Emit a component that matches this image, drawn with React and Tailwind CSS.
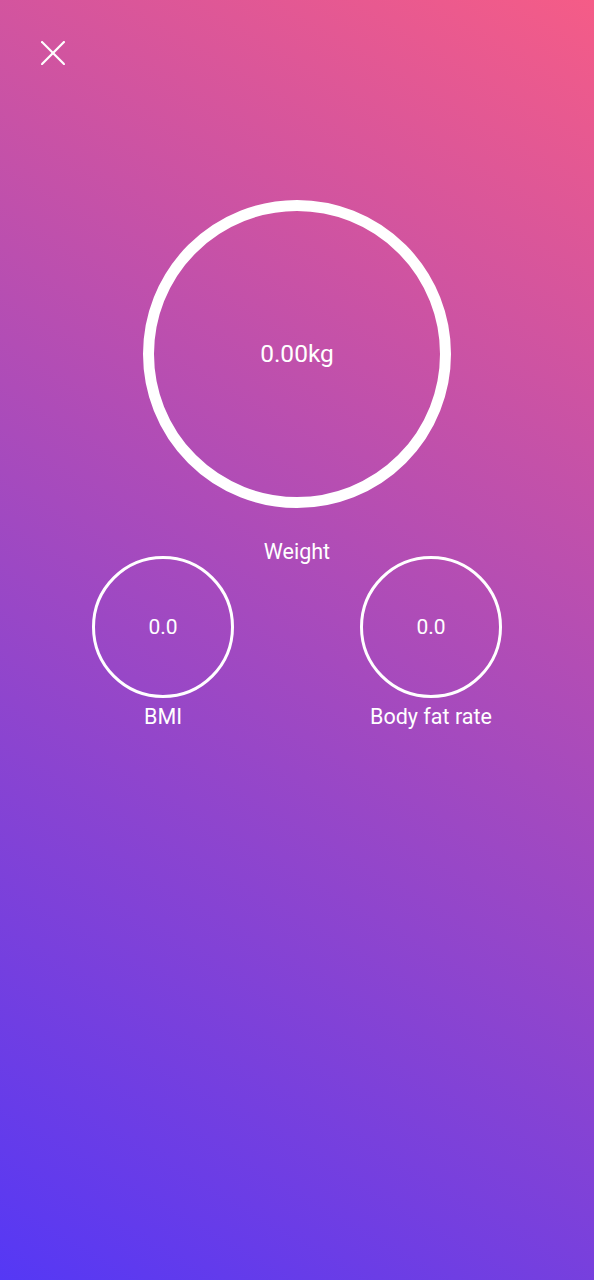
export default function App() {
  return (
    <div
      className="min-h-[1280px] w-full bg-[linear-gradient(30deg,#5538f5_0%,#f55c87_100%)] text-white"
      style={{ fontFamily: 'Roboto, "Noto Sans", sans-serif' }}
    >
      <div className="pl-[41px] pt-[41px]">
        <svg width="24" height="24" viewBox="0 0 24 24" fill="none" stroke="white" strokeWidth="2.2" strokeLinecap="square">
          <line x1="1" y1="1" x2="23" y2="23" />
          <line x1="23" y1="1" x2="1" y2="23" />
        </svg>
      </div>

      <div className="mt-[135px] flex flex-col items-center">
        <div className="flex h-[308px] w-[308px] items-center justify-center rounded-full border-[11px] border-white">
          <span className="text-[24.5px] leading-none">0.00kg</span>
        </div>
        <div className="mt-[32px] text-[21.5px] leading-[24px]">Weight</div>
      </div>

      <div className="mt-[-8px] flex justify-center gap-[126px]">
        <div className="flex w-[142px] flex-col items-center">
          <div className="flex h-[142px] w-[142px] items-center justify-center rounded-full border-[3px] border-white">
            <span className="text-[21px] leading-none">0.0</span>
          </div>
          <div className="mt-[7px] text-[21.5px] leading-[24px]">BMI</div>
        </div>
        <div className="flex w-[142px] flex-col items-center">
          <div className="flex h-[142px] w-[142px] items-center justify-center rounded-full border-[3px] border-white">
            <span className="text-[21px] leading-none">0.0</span>
          </div>
          <div className="mt-[7px] whitespace-nowrap text-[21.5px] leading-[24px]">Body fat rate</div>
        </div>
      </div>
    </div>
  )
}
